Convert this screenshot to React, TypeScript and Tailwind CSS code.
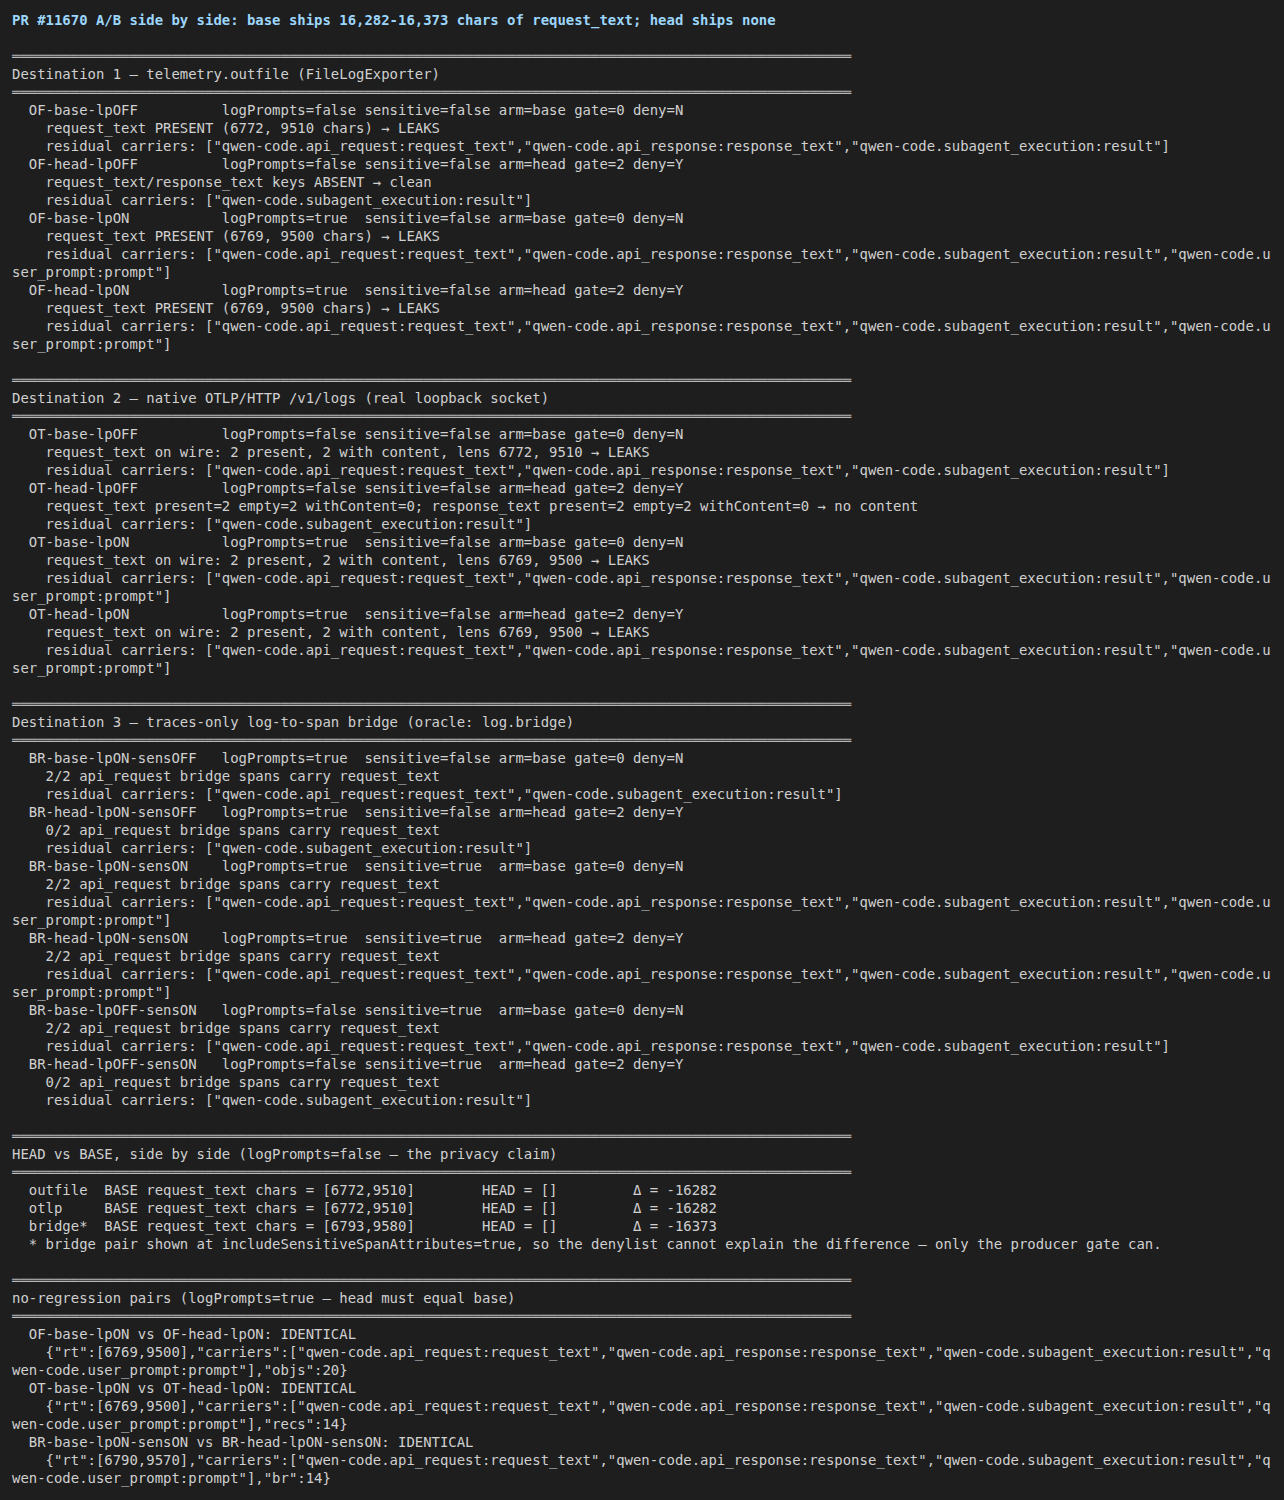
const COLS = 150;
const SEP = "═".repeat(100);

const R3 = '    residual carriers: ["qwen-code.api_request:request_text","qwen-code.api_response:response_text","qwen-code.subagent_execution:result"]';
const R4 = '    residual carriers: ["qwen-code.api_request:request_text","qwen-code.api_response:response_text","qwen-code.subagent_execution:result","qwen-code.user_prompt:prompt"]';
const R1 = '    residual carriers: ["qwen-code.subagent_execution:result"]';
const R2 = '    residual carriers: ["qwen-code.api_request:request_text","qwen-code.subagent_execution:result"]';

const row = (label: string, lp: string, sens: string, arm: string) =>
  "  " + label.padEnd(23) + "logPrompts=" + lp.padEnd(6) + "sensitive=" + sens.padEnd(6) + arm;

const pair = (a: string, rt: string, tail: string) => [
  "  " + a + ": IDENTICAL",
  '    {"rt":[' + rt + '],"carriers":["qwen-code.api_request:request_text","qwen-code.api_response:response_text","qwen-code.subagent_execution:result","qwen-code.user_prompt:prompt"],' + tail + "}",
];

const section = (title: string) => [SEP, title, SEP];

const lines: string[] = [
  "",
  ...section("Destination 1 — telemetry.outfile (FileLogExporter)"),
  row("OF-base-lpOFF", "false", "false", "arm=base gate=0 deny=N"),
  "    request_text PRESENT (6772, 9510 chars) → LEAKS",
  R3,
  row("OF-head-lpOFF", "false", "false", "arm=head gate=2 deny=Y"),
  "    request_text/response_text keys ABSENT → clean",
  R1,
  row("OF-base-lpON", "true", "false", "arm=base gate=0 deny=N"),
  "    request_text PRESENT (6769, 9500 chars) → LEAKS",
  R4,
  row("OF-head-lpON", "true", "false", "arm=head gate=2 deny=Y"),
  "    request_text PRESENT (6769, 9500 chars) → LEAKS",
  R4,
  "",
  ...section("Destination 2 — native OTLP/HTTP /v1/logs (real loopback socket)"),
  row("OT-base-lpOFF", "false", "false", "arm=base gate=0 deny=N"),
  "    request_text on wire: 2 present, 2 with content, lens 6772, 9510 → LEAKS",
  R3,
  row("OT-head-lpOFF", "false", "false", "arm=head gate=2 deny=Y"),
  "    request_text present=2 empty=2 withContent=0; response_text present=2 empty=2 withContent=0 → no content",
  R1,
  row("OT-base-lpON", "true", "false", "arm=base gate=0 deny=N"),
  "    request_text on wire: 2 present, 2 with content, lens 6769, 9500 → LEAKS",
  R4,
  row("OT-head-lpON", "true", "false", "arm=head gate=2 deny=Y"),
  "    request_text on wire: 2 present, 2 with content, lens 6769, 9500 → LEAKS",
  R4,
  "",
  ...section("Destination 3 — traces-only log-to-span bridge (oracle: log.bridge)"),
  row("BR-base-lpON-sensOFF", "true", "false", "arm=base gate=0 deny=N"),
  "    2/2 api_request bridge spans carry request_text",
  R2,
  row("BR-head-lpON-sensOFF", "true", "false", "arm=head gate=2 deny=Y"),
  "    0/2 api_request bridge spans carry request_text",
  R1,
  row("BR-base-lpON-sensON", "true", "true", "arm=base gate=0 deny=N"),
  "    2/2 api_request bridge spans carry request_text",
  R4,
  row("BR-head-lpON-sensON", "true", "true", "arm=head gate=2 deny=Y"),
  "    2/2 api_request bridge spans carry request_text",
  R4,
  row("BR-base-lpOFF-sensON", "false", "true", "arm=base gate=0 deny=N"),
  "    2/2 api_request bridge spans carry request_text",
  R3,
  row("BR-head-lpOFF-sensON", "false", "true", "arm=head gate=2 deny=Y"),
  "    0/2 api_request bridge spans carry request_text",
  R1,
  "",
  ...section("HEAD vs BASE, side by side (logPrompts=false — the privacy claim)"),
  "  outfile  BASE request_text chars = [6772,9510]        HEAD = []         Δ = -16282",
  "  otlp     BASE request_text chars = [6772,9510]        HEAD = []         Δ = -16282",
  "  bridge*  BASE request_text chars = [6793,9580]        HEAD = []         Δ = -16373",
  "  * bridge pair shown at includeSensitiveSpanAttributes=true, so the denylist cannot explain the difference — only the producer gate can.",
  "",
  ...section("no-regression pairs (logPrompts=true — head must equal base)"),
  ...pair("OF-base-lpON vs OF-head-lpON", "6769,9500", '"objs":20'),
  ...pair("OT-base-lpON vs OT-head-lpON", "6769,9500", '"recs":14'),
  ...pair("BR-base-lpON-sensON vs BR-head-lpON-sensON", "6790,9570", '"br":14'),
];

// terminal wraps hard at 150 columns
const wrapped = lines.flatMap((l) => {
  if (l.length <= COLS) return [l];
  const out: string[] = [];
  for (let i = 0; i < l.length; i += COLS) out.push(l.slice(i, i + COLS));
  return out;
});

export default function App() {
  return (
    <div className="min-h-screen bg-[#1e1e1e] px-3 pt-[11px] pb-4 font-['DejaVu_Sans_Mono',monospace] text-[13.95px] leading-[18px] text-[#d0d0d0]">
      <div className="whitespace-pre h-[18px] font-bold text-[#9cd6fb]">
        PR #11670 A/B side by side: base ships 16,282-16,373 chars of request_text; head ships none
      </div>
      {wrapped.map((l, i) => (
        <div key={i} className={`whitespace-pre h-[18px] ${l.startsWith("═") ? "text-[#b8b8b8]" : ""}`}>
          {l}
        </div>
      ))}
    </div>
  );
}
